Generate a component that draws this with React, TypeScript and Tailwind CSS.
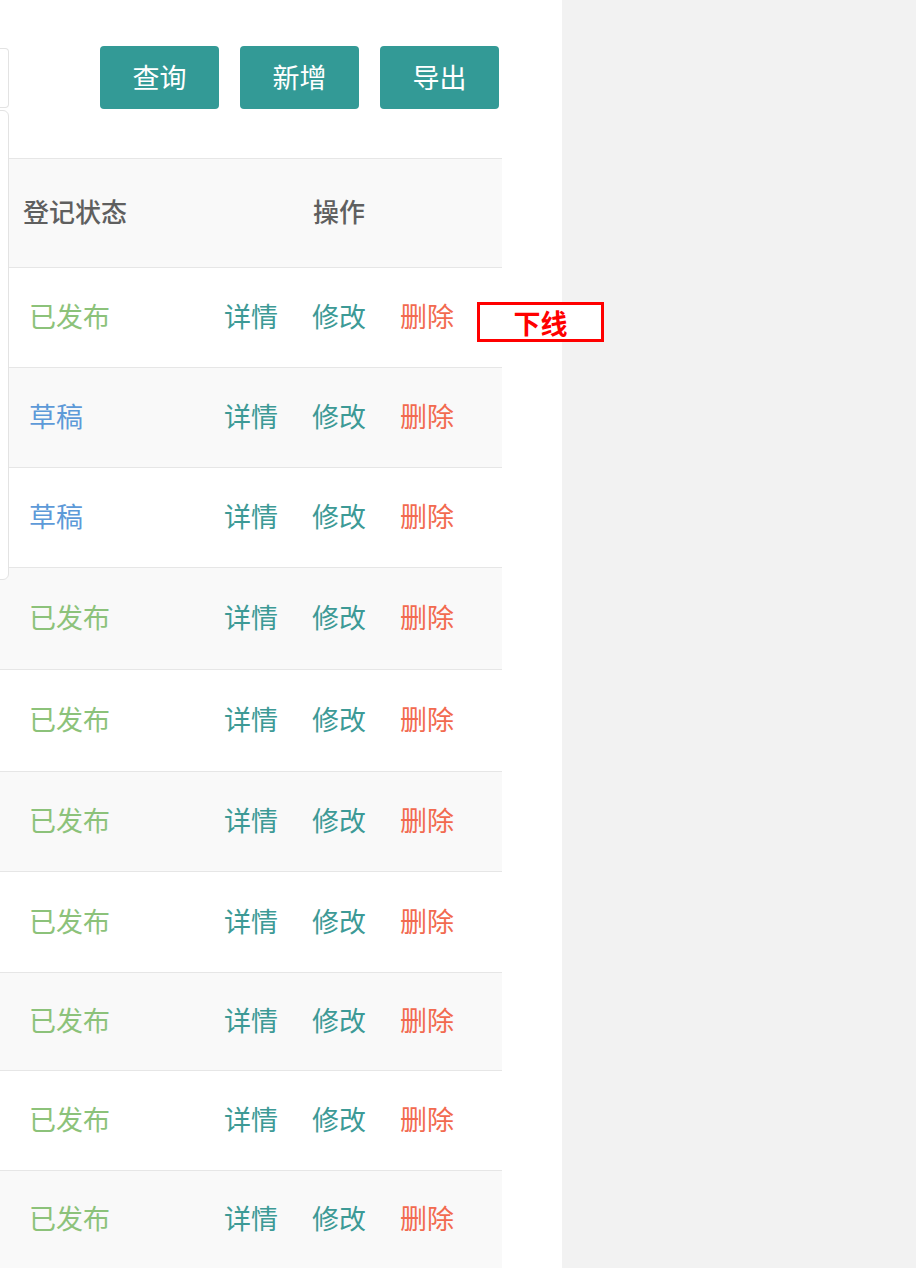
import React from 'react';

const rows = [
  { status: '已发布', draft: false, bg: 'bg-white', h: 'h-[100px]' },
  { status: '草稿', draft: true, bg: 'bg-[#f9f9f9]', h: 'h-[100px]' },
  { status: '草稿', draft: true, bg: 'bg-white', h: 'h-[100px]' },
  { status: '已发布', draft: false, bg: 'bg-[#f9f9f9]', h: 'h-[102px]' },
  { status: '已发布', draft: false, bg: 'bg-white', h: 'h-[102px]' },
  { status: '已发布', draft: false, bg: 'bg-[#f9f9f9]', h: 'h-[100px]' },
  { status: '已发布', draft: false, bg: 'bg-white', h: 'h-[101px]' },
  { status: '已发布', draft: false, bg: 'bg-[#f9f9f9]', h: 'h-[98px]' },
  { status: '已发布', draft: false, bg: 'bg-white', h: 'h-[100px]' },
  { status: '已发布', draft: false, bg: 'bg-[#f9f9f9]', h: 'h-[98px]' },
];

const buttons = ['查询', '新增', '导出'];

export default function App() {
  return (
    <div
      className="flex h-[1268px] w-[916px] overflow-hidden bg-[#f2f2f2]"
      style={{ fontFamily: '"Noto Sans CJK SC", "Noto Sans", sans-serif' }}
    >
      <div className="relative h-full w-[562px] bg-white">
        {/* toolbar */}
        <div className="flex h-[158px] items-start pt-[46px]">
          <div className="mt-[2px] h-[60px] w-[9px] rounded-r-[4px] border border-l-0 border-[#e3e3e3]" />
          <div className="ml-[91px] flex gap-[21px]">
            {buttons.map((b) => (
              <button
                key={b}
                className="flex h-[63px] w-[119px] items-center justify-center rounded-[4px] bg-[#339a96] text-[27px] text-white"
              >
                {b}
              </button>
            ))}
          </div>
        </div>

        {/* table */}
        <div className="w-[502px] border-t border-[#e6e6e6]">
          <div className="flex h-[109px] items-center border-b border-[#e6e6e6] bg-[#f9f9f9] pb-[5px] text-[26px] font-medium text-[#5f5f5f]">
            <span className="ml-[23px] w-[290px]">登记状态</span>
            <span>操作</span>
          </div>
          {rows.map((r, i) => (
            <div
              key={i}
              className={`flex items-center border-b border-[#e6e6e6] pb-[2px] text-[27px] ${r.bg} ${r.h}`}
            >
              <span className={`ml-[29px] w-[195px] ${r.draft ? 'text-[#5d9ad8]' : 'text-[#8cc27a]'}`}>
                {r.status}
              </span>
              <span className="w-[88px] text-[#3d9a96]">详情</span>
              <span className="w-[88px] text-[#3d9a96]">修改</span>
              <span className="text-[#f26a4f]">删除</span>
            </div>
          ))}
        </div>

        {/* dropdown edge overlapping the table */}
        <div className="absolute left-[-10px] top-[110px] h-[470px] w-[19px] rounded-r-[6px] border border-[#e3e3e3] bg-white" />

        {/* annotation */}
        <div className="absolute left-[477px] top-[302px] flex h-[40px] w-[127px] items-center justify-center border-[3px] border-[#ff0000] bg-white text-[27px] font-bold leading-none text-[#ff0000]">
          下线
        </div>
      </div>
    </div>
  );
}
